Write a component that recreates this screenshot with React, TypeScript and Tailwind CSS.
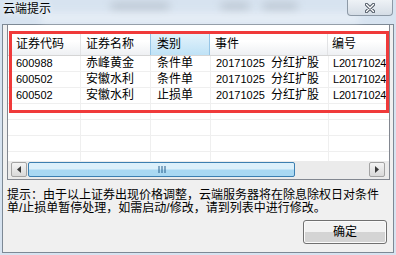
import React from "react";

const cols = [
  { title: "证券代码", w: "w-[73px]", pl: "pl-[8px]" },
  { title: "证券名称", w: "w-[70px]", pl: "pl-[5px]" },
  { title: "类别", w: "w-[60px]", pl: "pl-[6px]", active: true },
  { title: "事件", w: "w-[118px]", pl: "pl-[5px]" },
  { title: "编号", w: "w-[110px]", pl: "pl-[4px]" },
];

const rows = [
  { code: "600988", name: "赤峰黄金", kind: "条件单", date: "20171025", ev: "分红扩股", no: "L20171024" },
  { code: "600502", name: "安徽水利", kind: "条件单", date: "20171025", ev: "分红扩股", no: "L20171024" },
  { code: "600502", name: "安徽水利", kind: "止损单", date: "20171025", ev: "分红扩股", no: "L20171024" },
];

const CloseX = () => (
  <svg width="10" height="10" viewBox="0 0 10 10">
    <path d="M1.5 1.5 L8.5 8.5 M8.5 1.5 L1.5 8.5" stroke="#4b5561" strokeWidth="3.2" strokeLinecap="round" />
    <path d="M1.5 1.5 L8.5 8.5 M8.5 1.5 L1.5 8.5" stroke="#ffffff" strokeWidth="1.4" strokeLinecap="round" />
  </svg>
);

const ArrowBtn = ({ dir }: { dir: "left" | "right" }) => (
  <div className="w-[16px] h-[15px] border border-[#a3a3a3] rounded-[2px] bg-gradient-to-b from-[#f4f4f4] to-[#d9d9d9] flex items-center justify-center">
    <svg width="4" height="7" viewBox="0 0 4 7">
      {dir === "left" ? <path d="M4 0 L0 3.5 L4 7 Z" fill="#3a3a3a" /> : <path d="M0 0 L4 3.5 L0 7 Z" fill="#3a3a3a" />}
    </svg>
  </div>
);

const Cell = ({ i, children }: { i: number; children?: React.ReactNode }) => (
  <div className={`${cols[i].w} ${cols[i].pl} flex-none h-full border-r border-b border-[#efefef] whitespace-nowrap overflow-hidden`}>
    {children}
  </div>
);

export default function App() {
  const empty = [0, 1, 2, 3];
  return (
    <div className="relative w-[396px] h-[255px] overflow-hidden bg-[#d7e3f0] font-['Liberation_Sans','Noto_Sans_CJK_SC',sans-serif] text-[12px] text-black">
      {/* blurred aero glass behind the title */}
      <div className="absolute left-[110px] top-[2px] w-[60px] h-[9px] rounded-full bg-[#9aa3ad] opacity-40 blur-[4px]" />
      <div className="absolute left-[220px] top-[2px] w-[30px] h-[9px] rounded-full bg-[#9aa3ad] opacity-40 blur-[4px]" />
      <div className="absolute left-[262px] top-[2px] w-[36px] h-[9px] rounded-full bg-[#9aa3ad] opacity-40 blur-[4px]" />
      <div className="absolute left-[40px] top-[14px] w-[320px] h-[8px] rounded-full bg-[#f4f8fc] opacity-70 blur-[4px]" />

      <div className="relative h-[24px] flex items-start pl-[3px] pt-[2px]">
        <span className="leading-[14px] text-[12px] [text-shadow:0_0_6px_#ffffff]">云端提示</span>
        <div className="absolute right-[3px] top-0 w-[46px] h-[16px] rounded-b-[4px] border border-t-0 border-[#8d99a6] bg-gradient-to-b from-[#eef2f6] to-[#d5dde6] flex items-center justify-center">
          <CloseX />
        </div>
      </div>

      <div className="ml-[2px] w-[392px] h-[229px] border border-[#7d8995] bg-[#f0f0f0] flex flex-col">
        <div className="relative ml-[4px] w-[383px] h-[155px] border-x border-b border-[#828790] bg-white overflow-hidden flex flex-col">
          <div className="h-[7px] flex-none" />
          <div className="h-[24px] flex-none flex border-b border-[#d5d5d5] bg-gradient-to-b from-[#ffffff] from-40% to-[#eef0f3]">
            {cols.map((c) => (
              <div
                key={c.title}
                className={`${c.w} ${c.pl} flex-none h-full flex items-center whitespace-nowrap border-r ${
                  c.active
                    ? "border-l border-[#96c5e6] -ml-px bg-gradient-to-b from-[#e6f4fc] to-[#bfe2f6]"
                    : "border-[#e2e3e5]"
                }`}
              >
                {c.title}
              </div>
            ))}
          </div>
          <div className="h-[105px] flex-none overflow-hidden">
            {rows.map((r, k) => (
              <div key={k} className="h-[16px] flex leading-[15px]">
                <Cell i={0}><span className="text-[11px]">{r.code}</span></Cell>
                <Cell i={1}>{r.name}</Cell>
                <Cell i={2}>{r.kind}</Cell>
                <Cell i={3}>
                  <span className="text-[11px]">{r.date}</span>
                  <span className="ml-[6px]">{r.ev}</span>
                </Cell>
                <Cell i={4}><span className="text-[11px] tracking-[-0.2px]">{r.no}</span></Cell>
              </div>
            ))}
            {empty.map((k) => (
              <div key={k} className="h-[16px] flex">
                <Cell i={0} />
                <Cell i={1} />
                <Cell i={2} />
                <Cell i={3} />
                <Cell i={4} />
              </div>
            ))}
          </div>
          <div className="h-[18px] flex-none flex items-start pt-px bg-[#ebebeb]">
            <div className="w-[20px] flex-none pl-[3px]">
              <ArrowBtn dir="left" />
            </div>
            <div className="w-[267px] h-[15px] flex-none rounded-[2px] border border-[#3c7fb1] bg-gradient-to-b from-[#dcf0fb] from-45% to-[#a9d8f2] to-55% flex items-center justify-center">
              <svg width="8" height="7" viewBox="0 0 8 7">
                <path d="M1 0 V7 M4 0 V7 M7 0 V7" stroke="#245c8a" strokeWidth="1" />
              </svg>
            </div>
            <div className="flex-1" />
            <div className="w-[20px] flex-none">
              <ArrowBtn dir="right" />
            </div>
          </div>
          {/* red annotation frame */}
          <div className="absolute left-[1px] top-[6px] w-[380px] h-[82px] border-[3px] border-[#f03a3a] pointer-events-none" />
        </div>

        <div className="pl-[4px] mt-[9px] leading-[13px] whitespace-nowrap">
          提示：由于以上证券出现价格调整，云端服务器将在除息除权日对条件
          <br />
          单/止损单暂停处理，如需启动/修改，请到列表中进行修改。
        </div>

        <div className="mt-[5px] mr-[6px] self-end w-[84px] h-[24px] rounded-[3px] border border-[#707070] bg-gradient-to-b from-[#f2f2f2] from-50% to-[#d4d4d4] to-50% shadow-[inset_0_0_0_1px_#fbfbfb] flex items-center justify-center">
          确定
        </div>
      </div>
    </div>
  );
}
